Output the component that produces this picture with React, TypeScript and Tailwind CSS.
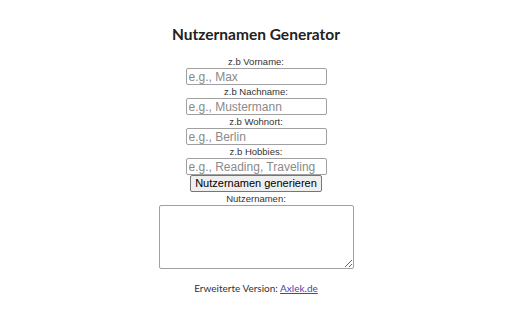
export default function App() {
  const fields = [
    { label: "z.b Vorname:", placeholder: "e.g., Max" },
    { label: "z.b Nachname:", placeholder: "e.g., Mustermann" },
    { label: "z.b Wohnort:", placeholder: "e.g., Berlin" },
    { label: "z.b Hobbies:", placeholder: "e.g., Reading, Traveling" },
  ];

  return (
    <div className="w-[512px] h-[320px] bg-white flex flex-col items-center pt-[24px] font-['Liberation_Sans',Arial,sans-serif] text-black">
      <h1 className="font-['Lato',sans-serif] font-bold text-[15.5px] leading-[20px] text-[#222] mb-[11px]">
        Nutzernamen Generator
      </h1>

      {fields.map((f) => (
        <div key={f.label} className="flex flex-col items-center">
          <label className="text-[9.5px] leading-[13px] text-[#333]">{f.label}</label>
          <input
            type="text"
            placeholder={f.placeholder}
            className="w-[141px] h-[17px] px-[2px] border border-[#a0a0a0] rounded-[2px] text-[12px] leading-[15px] placeholder:text-[#8a8a8a] outline-none"
          />
        </div>
      ))}

      <button className="h-[17px] px-[4px] py-0 whitespace-nowrap border border-[#767676] rounded-[2px] bg-[#efefef] text-[11px] leading-[15px] text-black">
        Nutzernamen generieren
      </button>

      <label className="text-[9.5px] leading-[13px] text-[#333]">Nutzernamen:</label>
      <textarea className="w-[195px] h-[64px] border border-[#a0a0a0] rounded-[2px] outline-none" />

      <p className="mt-[13px] font-['Lato',sans-serif] text-[10px] leading-[13px] text-[#333]">
        Erweiterte Version:{" "}
        <a href="#" className="underline text-[#4b44a8]">
          Axlek.de
        </a>
      </p>
    </div>
  );
}
